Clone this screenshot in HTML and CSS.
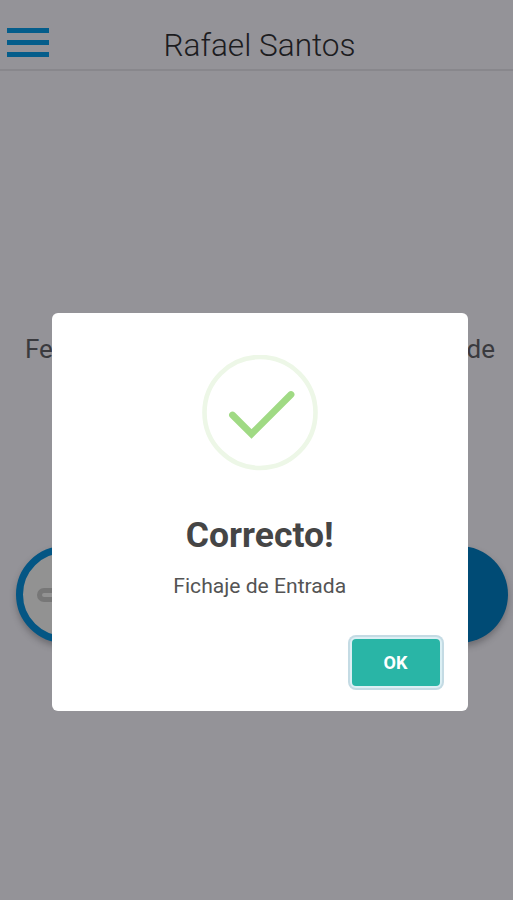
FILE: index.html
```html
<!DOCTYPE html>
<html lang="es">
<head>
<meta charset="utf-8">
<title>Fichaje</title>
<link rel="stylesheet" href="styles.css">
</head>
<body>
<header class="topbar">
  <div class="menu"><span></span><span></span><span></span></div>
  <h1 class="user">Rafael Santos</h1>
</header>
<main class="content">
  <p class="status"><span>Fe</span><span>de</span></p>
  <div class="actions">
    <div class="round light"><i class="dash"></i></div>
    <div class="round dark"></div>
  </div>
</main>
<section class="modal">
  <svg class="check" width="116" height="116" viewBox="0 0 116 116" fill="none">
    <circle cx="58" cy="57.5" r="55.5" stroke="#edf7e7" stroke-width="4.6"/>
    <path d="M30.5 60L49.5 79L89 39.5" stroke="#a0da84" stroke-width="6.8" stroke-linecap="round"/>
  </svg>
  <h2 class="title">Correcto!</h2>
  <p class="text">Fichaje de Entrada</p>
  <div class="footer"><button class="ok">OK</button></div>
</section>
</body>
</html>
```

FILE: styles.css
```css
* { box-sizing: border-box; }
body {
  margin: 0;
  height: 900px;
  overflow: hidden;
  background: #949398;
  font-family: Roboto, sans-serif;
}
h1, h2, p { margin: 0; }
.topbar {
  height: 71px;
  display: grid;
  grid-template-columns: 49px 1fr 43px;
  align-items: start;
  border-bottom: 2px solid #88878c;
}
.menu {
  display: grid;
  gap: 7px;
  padding: 28px 0 0 7px;
}
.menu span { height: 5px; background: #045d8b; }
.user {
  padding-top: 27px;
  text-align: center;
  font-size: 31.6px;
  line-height: 38px;
  font-weight: 300;
  color: #1c1c1f;
  white-space: nowrap;
}
.content { padding: 262px 5px 0 16px; }
.status {
  display: flex;
  justify-content: space-between;
  padding: 0 13px 0 9px;
  font-size: 26px;
  line-height: 32px;
  color: #3a3a3e;
}
.actions {
  display: flex;
  justify-content: space-between;
  margin-top: 181px;
}
.round {
  width: 97px;
  height: 97px;
  border-radius: 50%;
  box-shadow: 0 4px 6px rgba(40, 40, 45, .35);
}
.light {
  display: flex;
  align-items: center;
  padding-left: 14px;
  border: 7px solid #045684;
  background: #929292;
}
.dash {
  width: 40px;
  height: 14px;
  border: 5px solid #777;
  border-radius: 7px;
}
.dark { background: #004b75; }
.modal {
  position: absolute;
  left: 52px;
  top: 312.5px;
  width: 415.5px;
  height: 398.5px;
  display: flex;
  flex-direction: column;
  align-items: center;
  padding-top: 42px;
  border-radius: 6px;
  background: #fff;
}
.check { flex: none; }
.title {
  margin-top: 43px;
  font-size: 35.5px;
  line-height: 42px;
  font-weight: 700;
  color: #454545;
}
.text {
  margin-top: 17px;
  font-size: 21.1px;
  line-height: 26px;
  color: #545454;
}
.footer {
  align-self: flex-end;
  padding: 40px 28px 0 0;
}
.ok {
  display: block;
  width: 88px;
  height: 47px;
  padding: 0;
  border: 0;
  border-radius: 4px;
  background: #29b5a6;
  box-shadow: 0 0 0 2px #dceff4, 0 0 0 4px #c4dbe4;
  color: #fff;
  font: 700 18px Roboto, sans-serif;
}
```
